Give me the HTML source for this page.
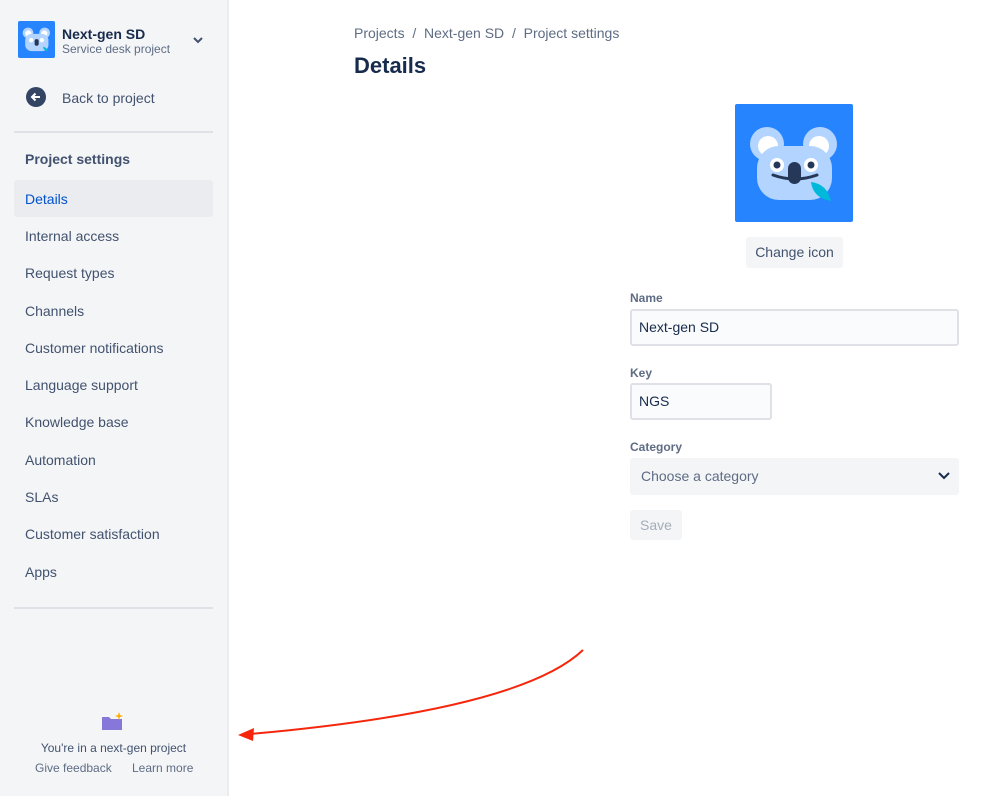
<!DOCTYPE html>
<html><head><meta charset="utf-8"><style>
body{margin:0;width:999px;height:796px;font-family:"Liberation Sans",sans-serif;background:#fff;position:relative;overflow:hidden;color:#172b4d}
.sb{position:absolute;left:0;top:0;width:227px;height:796px;background:#f4f5f7;border-right:2px solid #ebecf0}
.a{position:absolute}
.nav{position:absolute;left:25px;font-size:14px;color:#42526e}
.lbl{position:absolute;left:630px;font-size:12px;font-weight:bold;color:#5e6c84}
.inp{position:absolute;box-sizing:border-box;border:2px solid #dfe1e6;background:#fafbfc;border-radius:3px;font-size:14px;padding-left:7px;color:#172b4d}
</style></head><body>
<div class="sb">
<svg class="a" style="left:18px;top:21px" width="37" height="37" viewBox="0 0 118 118"><rect width="118" height="118" rx="6" fill="#2684ff"/><circle cx="32" cy="38" r="17" fill="#b3d4ff"/><circle cx="33" cy="40" r="10" fill="#fff"/><circle cx="85" cy="38" r="17" fill="#b3d4ff"/><circle cx="84" cy="40" r="10" fill="#fff"/><rect x="23" y="41" width="74" height="55" rx="20" fill="#b3d4ff"/><circle cx="42" cy="61" r="7" fill="#fff"/><circle cx="76" cy="61" r="7" fill="#fff"/><rect x="53" y="58" width="13" height="21" rx="6" fill="#253858"/><path d="M80 82 Q92 84 95 96 Q80 94 80 82Z" fill="#00b8d9"/></svg>
<div class="a" style="left:62px;top:26px;font-size:14px;font-weight:bold;color:#172b4d">Next-gen SD</div>
<div class="a" style="left:62px;top:42px;font-size:12px;color:#5e6c84">Service desk project</div>
<svg class="a" style="left:192px;top:35px" width="12" height="10" viewBox="0 0 12 10"><path d="M2 3l4 4 4-4" stroke="#42526e" stroke-width="2" fill="none"/></svg>
<svg class="a" style="left:26px;top:87px" width="20" height="20" viewBox="0 0 20 20"><circle cx="10" cy="10" r="10" fill="#344563"/><path d="M14 10H6M9.5 6.5L6 10l3.5 3.5" stroke="#fff" stroke-width="2" fill="none"/></svg>
<div class="a" style="left:62px;top:90px;font-size:14px;color:#42526e">Back to project</div>
<div class="a" style="left:14px;top:131px;width:199px;height:2px;background:#dfe1e6"></div>
<div class="a" style="left:25px;top:151px;font-size:14px;font-weight:bold;color:#42526e">Project settings</div>
<div class="a" style="left:14px;top:180px;width:199px;height:37px;background:#ebecf0;border-radius:3px"></div>
<div class="nav" style="top:191px;color:#0052cc">Details</div>
<div class="nav" style="top:228px">Internal access</div>
<div class="nav" style="top:265px">Request types</div>
<div class="nav" style="top:303px">Channels</div>
<div class="nav" style="top:340px">Customer notifications</div>
<div class="nav" style="top:377px">Language support</div>
<div class="nav" style="top:414px">Knowledge base</div>
<div class="nav" style="top:452px">Automation</div>
<div class="nav" style="top:489px">SLAs</div>
<div class="nav" style="top:526px">Customer satisfaction</div>
<div class="nav" style="top:564px">Apps</div>
<div class="a" style="left:14px;top:607px;width:199px;height:2px;background:#dfe1e6"></div>
<svg class="a" style="left:101px;top:712px" width="24" height="20" viewBox="0 0 24 20"><path d="M1 5h7l2 2h11v11H1z" fill="#8777d9"/><path d="M18 0l1 3 3 1-3 1-1 3-1-3-3-1 3-1z" fill="#ffab00"/></svg>
<div class="a" style="left:0;width:227px;text-align:center;top:741px;font-size:12px;color:#42526e">You're in a next-gen project</div>
<div class="a" style="left:35px;top:761px;font-size:12px;color:#5e6c84">Give feedback</div>
<div class="a" style="left:132px;top:761px;font-size:12px;color:#5e6c84">Learn more</div>
</div>
<div class="a" style="left:354px;top:25px;font-size:14px;color:#5e6c84">Projects &nbsp;/&nbsp; Next-gen SD &nbsp;/&nbsp; Project settings</div>
<div class="a" style="left:354px;top:53px;font-size:22px;font-weight:bold;color:#172b4d">Details</div>
<svg class="a" style="left:735px;top:104px" width="118" height="118" viewBox="0 0 118 118"><rect width="118" height="118" rx="2" fill="#2684ff"/><circle cx="32" cy="40" r="17" fill="#b3d4ff"/><circle cx="33" cy="42" r="10" fill="#fff"/><circle cx="85" cy="40" r="17" fill="#b3d4ff"/><circle cx="84" cy="42" r="10" fill="#fff"/><rect x="22" y="42" width="75" height="54" rx="22" fill="#b3d4ff"/><circle cx="42" cy="61" r="7" fill="#fff"/><circle cx="42" cy="61" r="3.5" fill="#253858"/><circle cx="76" cy="61" r="7" fill="#fff"/><circle cx="76" cy="61" r="3.5" fill="#253858"/><path d="M38 71 Q60 79 82 71" stroke="#253858" stroke-width="3" fill="none" stroke-linecap="round"/><rect x="53" y="58" width="13" height="22" rx="6.5" fill="#253858"/><path d="M76 78 Q92 80 96 97 Q78 94 76 78Z" fill="#00b8d9"/></svg>
<div class="a" style="left:746px;top:237px;width:97px;height:31px;background:#f4f5f7;border-radius:3px;font-size:14px;text-align:center;line-height:31px;color:#42526e">Change icon</div>
<div class="lbl" style="top:291px">Name</div>
<div class="inp" style="left:630px;top:309px;width:329px;height:37px;line-height:33px">Next-gen SD</div>
<div class="lbl" style="top:366px">Key</div>
<div class="inp" style="left:630px;top:383px;width:142px;height:37px;line-height:33px">NGS</div>
<div class="lbl" style="top:440px">Category</div>
<div class="a" style="left:630px;top:458px;width:329px;height:37px;background:#f4f5f7;border-radius:3px;font-size:14px;line-height:37px;color:#5e6c84;box-sizing:border-box;padding-left:11px">Choose a category</div>
<svg class="a" style="left:937px;top:471px" width="14" height="10" viewBox="0 0 14 10"><path d="M2 2l5 5 5-5" stroke="#172b4d" stroke-width="2" fill="none"/></svg>
<div class="a" style="left:630px;top:510px;width:52px;height:30px;background:#f4f5f7;border-radius:3px;font-size:14px;text-align:center;line-height:30px;color:#a5adba">Save</div>
<svg class="a" style="left:0;top:0" width="999" height="796"><path d="M583 650 Q520 710 250 734" stroke="#f5260b" stroke-width="2" fill="none"/><path d="M238 735 L254 728 L253 741Z" fill="#f5260b"/></svg>
</body></html>
